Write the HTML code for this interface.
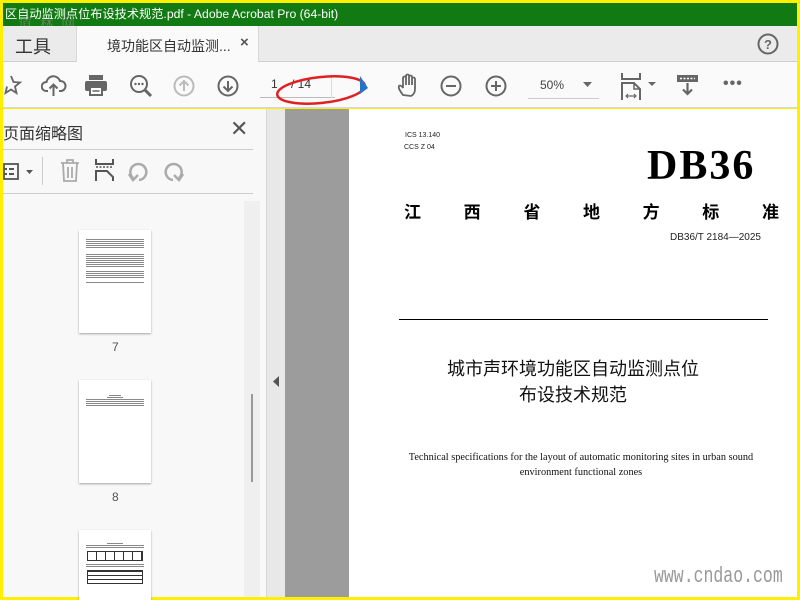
<!DOCTYPE html>
<html><head><meta charset="utf-8"><style>
*{margin:0;padding:0;box-sizing:border-box}
body{width:800px;height:600px;overflow:hidden;background:#ffef00;font-family:"Liberation Sans","Noto Sans CJK SC",sans-serif;position:relative}
.abs{position:absolute}
#title{left:3px;top:3px;width:794px;height:23px;background:#127a12;color:#fff;font-size:12.2px;line-height:22px;padding-left:2px;white-space:nowrap;overflow:hidden}
#tabs{left:3px;top:26px;width:794px;height:36px;background:#ebebeb;border-bottom:1px solid #cfcfcf}
#tb{left:3px;top:62px;width:794px;height:46px;background:#fafafa;border-bottom:1px solid #d6d6d6}
#left{left:3px;top:109px;width:264px;height:488px;background:#f8f8f8;border-right:1px solid #d8d8d8}
#strip{left:267px;top:109px;width:18px;height:488px;background:#e8e8e8}
#dark{left:285px;top:109px;width:64px;height:488px;background:#9c9c9c}
#page{left:349px;top:109px;width:448px;height:488px;background:#fff}
svg{position:absolute}
.thumb{position:absolute;left:79px;width:72px;background:#fff;box-shadow:0 1px 2px rgba(0,0,0,.35)}
.ln{height:1px;background:#888;margin:1px 7px}
</style></head><body>
<div id="title" class="abs">区自动监测点位布设技术规范.pdf - Adobe Acrobat Pro (64-bit)</div>
<div class="abs" style="left:18px;top:14px;color:#8a8a8a;opacity:.7;font-size:14px;letter-spacing:2px;font-family:'Noto Serif CJK SC',serif">道 林 网</div>
<div id="tabs" class="abs">
  <div class="abs" style="left:12px;top:7px;font-size:18px;color:#333">工具</div>
  <div class="abs" style="left:73px;top:0;width:183px;height:36px;background:#fafafa;border-left:1px solid #d8d8d8;border-right:1px solid #d8d8d8"></div>
  <div class="abs" style="left:104px;top:10px;font-size:14px;color:#333">境功能区自动监测...</div>
  <div class="abs" style="left:237px;top:8px;font-size:15px;color:#555;font-weight:bold">×</div>
  <svg style="left:754px;top:7px" width="22" height="22"><circle cx="11" cy="11" r="9.5" fill="none" stroke="#666" stroke-width="2"/><text x="11" y="16" text-anchor="middle" font-size="13" font-weight="bold" fill="#666" font-family="Liberation Sans">?</text></svg>
</div>
<div id="tb" class="abs">
  <svg style="left:0;top:12px" width="20" height="22"><path d="M8 2 L10.5 8 L17 8.5 L12 12.5 L13.5 19 L8 15.5 L2.5 19 L4 12.5" fill="none" stroke="#666" stroke-width="1.8"/></svg>
  <svg style="left:38px;top:12px" width="26" height="24"><path d="M7 17 H5 A4.5 4.5 0 0 1 5.5 8 A7 7 0 0 1 19 7 A5 5 0 0 1 20 17 H18" fill="none" stroke="#666" stroke-width="2"/><path d="M12.5 22 V11 M8.5 14.5 L12.5 10.5 L16.5 14.5" fill="none" stroke="#666" stroke-width="2"/></svg>
  <svg style="left:81px;top:12px" width="24" height="22"><rect x="5" y="1" width="14" height="5" fill="#666"/><rect x="1" y="7" width="22" height="10" rx="2" fill="#666"/><rect x="6" y="13" width="12" height="8" fill="#fff" stroke="#666" stroke-width="2"/><line x1="8.5" y1="17" x2="15.5" y2="17" stroke="#666" stroke-width="1.5"/></svg>
  <svg style="left:126px;top:12px" width="24" height="24"><circle cx="10" cy="10" r="8" fill="none" stroke="#666" stroke-width="2"/><path d="M16 16 L22 22" stroke="#666" stroke-width="3"/><circle cx="6.5" cy="10" r="1.2" fill="#666"/><circle cx="10" cy="10" r="1.2" fill="#666"/><circle cx="13.5" cy="10" r="1.2" fill="#666"/></svg>
  <svg style="left:170px;top:13px" width="22" height="22"><circle cx="11" cy="11" r="9.5" fill="none" stroke="#bbb" stroke-width="2"/><path d="M11 16 V6 M6.5 10.5 L11 6 L15.5 10.5" fill="none" stroke="#bbb" stroke-width="2"/></svg>
  <svg style="left:214px;top:13px" width="22" height="22"><circle cx="11" cy="11" r="9.5" fill="none" stroke="#666" stroke-width="2"/><path d="M11 6 V16 M6.5 11.5 L11 16 L15.5 11.5" fill="none" stroke="#666" stroke-width="2"/></svg>
  <div class="abs" style="left:257px;top:35px;width:75px;height:1px;background:#bbb"></div>
  <div class="abs" style="left:268px;top:15px;font-size:12px;color:#333">1</div>
  <div class="abs" style="left:288px;top:15px;font-size:12px;color:#333">/ 14</div>
  <div class="abs" style="left:328px;top:12px;width:1px;height:24px;background:#ddd"></div>
  <svg style="left:268px;top:8px" width="102" height="44"><ellipse cx="50" cy="20" rx="44" ry="13" transform="rotate(-6 50 20)" fill="none" stroke="#e02020" stroke-width="2.5"/></svg>
  <svg style="left:356px;top:14px" width="10" height="20"><path d="M1 0 L9 12 L1 18 Z" fill="#2a72c8"/></svg>
  <svg style="left:393px;top:11px" width="26" height="26"><path d="M7 22 C4 18 2 15 3 13 C4 12 6 13 7 15 V5 C7 3 10 3 10 5 V12 V3 C10 1 13 1 13 3 V12 V4 C13 2 16 2 16 4 V12 V6 C16 4 19 4 19 6 V16 C19 20 17 22 15 23 Z" fill="none" stroke="#666" stroke-width="1.8"/></svg>
  <svg style="left:437px;top:13px" width="22" height="22"><circle cx="11" cy="11" r="9.5" fill="none" stroke="#666" stroke-width="2"/><path d="M6 11 H16" stroke="#666" stroke-width="2"/></svg>
  <svg style="left:482px;top:13px" width="22" height="22"><circle cx="11" cy="11" r="9.5" fill="none" stroke="#666" stroke-width="2"/><path d="M6 11 H16 M11 6 V16" stroke="#666" stroke-width="2"/></svg>
  <div class="abs" style="left:537px;top:16px;font-size:12px;color:#444">50%</div>
  <svg style="left:580px;top:20px" width="10" height="6"><path d="M0 0 H9 L4.5 5 Z" fill="#666"/></svg>
  <div class="abs" style="left:525px;top:36px;width:71px;height:1px;background:#ccc"></div>
  <svg style="left:618px;top:11px" width="24" height="28"><path d="M1 0 V6 H19 V0" fill="none" stroke="#666" stroke-width="2"/><path d="M1 27 V10 H13 L19 16 V27" fill="none" stroke="#666" stroke-width="2"/><path d="M13 10 V16 H19" fill="none" stroke="#666" stroke-width="1.5"/><path d="M5 23 H15 M7 21 L5 23 L7 25 M13 21 L15 23 L13 25" fill="none" stroke="#666" stroke-width="1.2"/></svg>
  <svg style="left:645px;top:20px" width="10" height="6"><path d="M0 0 H8 L4 4 Z" fill="#666"/></svg>
  <svg style="left:673px;top:12px" width="24" height="24"><rect x="1" y="1" width="21" height="7" fill="#666"/><path d="M4 4.5 H19" stroke="#fff" stroke-width="1.5" stroke-dasharray="2 1.5"/><path d="M11.5 9 V20 M7 15.5 L11.5 20 L16 15.5" fill="none" stroke="#666" stroke-width="2.2"/></svg>
  <div class="abs" style="left:720px;top:13px;font-size:16px;color:#666;letter-spacing:1px;font-weight:bold">•••</div>
</div>
<div id="left" class="abs">
  <div class="abs" style="left:0;top:11px;font-size:16px;color:#333">页面缩略图</div>
  <div class="abs" style="left:227px;top:7px;font-size:22px;color:#555">✕</div>
  <div class="abs" style="left:0;top:40px;width:250px;height:1px;background:#ccc"></div>
  <svg style="left:0;top:53px" width="32" height="20"><rect x="1" y="2" width="14" height="15" fill="none" stroke="#555" stroke-width="1.8"/><path d="M1 7 H4 M1 12 H4 M6 7 H11 M6 12 H11" stroke="#555" stroke-width="2"/><path d="M23 8 H30 L26.5 12 Z" fill="#555"/></svg>
  <div class="abs" style="left:39px;top:48px;width:1px;height:28px;background:#ccc"></div>
  <svg style="left:56px;top:50px" width="22" height="24"><path d="M2 4 H20 M8 4 V1 H14 V4 M4 4 L5 22 H17 L18 4 M9 8 V19 M13 8 V19" fill="none" stroke="#aaa" stroke-width="1.8"/></svg>
  <svg style="left:91px;top:50px" width="22" height="24"><path d="M2 0 V5 H19 V0" fill="none" stroke="#555" stroke-width="2"/><path d="M2 8 H19" stroke="#555" stroke-width="1.5" stroke-dasharray="2 1.5"/><path d="M2 22 V12 H13 L19 18 V22" fill="none" stroke="#555" stroke-width="2"/></svg>
  <svg style="left:124px;top:51px" width="24" height="22"><path d="M6 18 A8 8 0 1 1 12 20" fill="none" stroke="#aaa" stroke-width="2.5"/><path d="M2 14 L6 20 L11 15" fill="none" stroke="#aaa" stroke-width="2.5"/></svg>
  <svg style="left:158px;top:51px" width="24" height="22"><path d="M18 18 A8 8 0 1 0 12 20" fill="none" stroke="#aaa" stroke-width="2.5"/><path d="M22 14 L18 20 L13 15" fill="none" stroke="#aaa" stroke-width="2.5"/></svg>
  <div class="abs" style="left:0;top:84px;width:250px;height:1px;background:#ccc"></div>
  <div class="abs" style="left:241px;top:92px;width:16px;height:396px;background:#efefef"></div>
  <div class="abs" style="left:248px;top:285px;width:2px;height:88px;background:#999"></div>
  <div class="thumb" style="top:121px;height:103px;left:76px">
    <div style="height:8px"></div>
    <div class="ln"></div><div class="ln"></div><div class="ln"></div><div class="ln"></div><div class="ln"></div><div class="ln" style="margin-top:6px"></div><div class="ln"></div><div class="ln"></div><div class="ln"></div><div class="ln"></div><div class="ln"></div><div class="ln"></div><div class="ln" style="margin-top:4px"></div><div class="ln"></div><div class="ln"></div><div class="ln"></div><div class="ln" style="margin-top:4px"></div>
  </div>
  <div class="abs" style="left:109px;top:231px;font-size:12px;color:#555">7</div>
  <div class="thumb" style="top:271px;height:103px;left:76px">
    <div style="height:14px"></div><div class="ln" style="margin:1px 30px"></div><div class="ln" style="margin:1px 28px"></div><div class="ln"></div><div class="ln"></div><div class="ln"></div><div class="ln"></div>
  </div>
  <div class="abs" style="left:109px;top:381px;font-size:12px;color:#555">8</div>
  <div class="thumb" style="top:421px;height:70px;left:76px">
    <div style="height:12px"></div><div class="ln" style="margin:1px 28px"></div><div class="ln"></div><div class="ln"></div>
    <div style="margin:3px 8px;height:10px;border:1px solid #333;background:repeating-linear-gradient(90deg,#fff 0 8px,#333 8px 9px)"></div>
    <div class="ln"></div><div class="ln"></div>
    <div style="margin:3px 8px;height:14px;border:1px solid #333;background:repeating-linear-gradient(0deg,#fff 0 3px,#333 3px 4px)"></div>
  </div>
</div>
<div id="strip" class="abs"><svg style="left:5px;top:267px" width="8" height="12"><path d="M7 0 V11 L1 5.5 Z" fill="#555"/></svg></div>
<div id="dark" class="abs"></div>
<div id="page" class="abs">
  <div class="abs" style="left:56px;top:23px;font-size:7px;color:#222">ICS 13.140</div>
  <div class="abs" style="left:55px;top:35px;font-size:7px;color:#222">CCS Z 04</div>
  <div class="abs" style="left:298px;top:34px;font-size:42px;line-height:46px;font-weight:bold;font-family:'Liberation Serif',serif;color:#000;letter-spacing:2px">DB36</div>
  <div class="abs" style="left:55px;top:89px;width:375px;display:flex;justify-content:space-between;font-size:17px;color:#000;font-family:'Noto Sans CJK SC',sans-serif;font-weight:bold"><span>江</span><span>西</span><span>省</span><span>地</span><span>方</span><span>标</span><span>准</span></div>
  <div class="abs" style="left:321px;top:123px;font-size:10px;color:#222">DB36/T 2184—2025</div>
  <div class="abs" style="left:50px;top:210px;width:369px;height:1px;background:#000"></div>
  <div class="abs" style="left:0;top:246px;width:448px;text-align:center;font-size:18px;line-height:26px;color:#111;font-family:'Noto Sans CJK SC',sans-serif">城市声环境功能区自动监测点位<br>布设技术规范</div>
  <div class="abs" style="left:8px;top:341px;width:448px;text-align:center;font-size:10.3px;line-height:15px;color:#111;font-family:'Liberation Serif',serif">Technical specifications for the layout of automatic monitoring sites in urban sound<br>environment functional zones</div>
  <div class="abs" style="left:305px;top:455px;font-size:22px;color:#999;font-family:'Liberation Mono',monospace;transform:scaleX(.75);transform-origin:left">www.cndao.com</div>
</div>
</body></html>
